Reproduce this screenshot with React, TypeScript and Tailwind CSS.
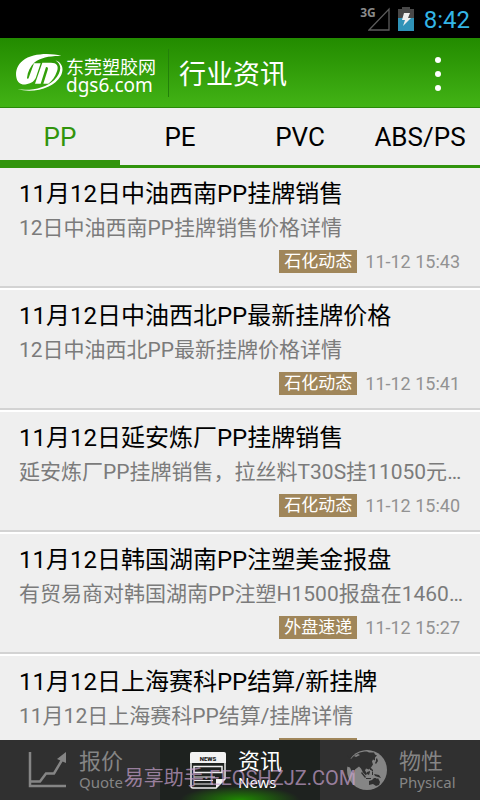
import { useState } from "react";

type NewsItem = {
  title: string;
  summary: string;
  tag: string;
  time: string;
};

const TABS = ["PP", "PE", "PVC", "ABS/PS"];

const NEWS: NewsItem[] = [
  {
    title: "11月12日中油西南PP挂牌销售",
    summary: "12日中油西南PP挂牌销售价格详情",
    tag: "石化动态",
    time: "11-12 15:43",
  },
  {
    title: "11月12日中油西北PP最新挂牌价格",
    summary: "12日中油西北PP最新挂牌价格详情",
    tag: "石化动态",
    time: "11-12 15:41",
  },
  {
    title: "11月12日延安炼厂PP挂牌销售",
    summary: "延安炼厂PP挂牌销售，拉丝料T30S挂11050元/吨",
    tag: "石化动态",
    time: "11-12 15:40",
  },
  {
    title: "11月12日韩国湖南PP注塑美金报盘",
    summary: "有贸易商对韩国湖南PP注塑H1500报盘在1460美元/吨",
    tag: "外盘速递",
    time: "11-12 15:27",
  },
  {
    title: "11月12日上海赛科PP结算/新挂牌",
    summary: "11月12日上海赛科PP结算/挂牌详情",
    tag: "石化动态",
    time: "11-12 15:20",
  },
];

function StatusBar() {
  return (
    <div className="flex h-[38px] shrink-0 items-center justify-end bg-black pr-2.5">
      <span className="self-start pt-1.5 font-['Open_Sans',sans-serif] text-xs leading-[14px] font-bold text-[#8a8a8a]">
        3G
      </span>
      <svg className="-ml-2 h-6 w-[22px]" viewBox="0 0 22 24" fill="none" stroke="#5c5c5c">
        <path d="M1 23 21 2v21z" strokeWidth="1.3" />
      </svg>
      <svg className="ml-2 h-6 w-4" viewBox="0 0 16 24">
        <path d="M4 0h8v2h4v9H0V2h4z" fill="#484848" />
        <path d="M0 11h16v13H0z" fill="#2f93b8" />
        <path d="M6 6h6l-2 5h3L5 19l2-6H4z" fill="#eee" />
      </svg>
      <span className="ml-2.5 pt-0.5 text-2xl leading-8 text-[#33b5e5]">8:42</span>
    </div>
  );
}

function Logo() {
  return (
    <svg className="h-[38px] w-12" viewBox="48 72 144 114" fill="#fff">
      <path d="M184 78C150 68 96 70 68 92c-18 14-22 34-19 50 3 18 16 24 30 21 16-3 26-10 30-24l13-39h-20l-16 44c-2 4-6 3-5-1 2-17 10-34 23-46 18-14 46-20 80-19z" />
      <path d="M127 98h26c17 0 24 10 18 26-6 17-14 29-26 37h-15l13-41c2-6 1-9-5-9l-16 50h-17z" />
      <path d="M166 91c23 8 26 28 16 47-20 36-78 53-130 40 44 5 86-4 111-28 21-21 25-46 3-59z" />
    </svg>
  );
}

function ChartIcon() {
  return (
    <svg className="h-9 w-10" viewBox="0 0 40 36" fill="none" stroke="#858585">
      <path d="M3 0v34H39" strokeWidth="2.500" />
      <path d="M4 29.500h9l6-8h8L35 8" strokeWidth="2.500" />
      <path d="M39 0v11l-9-4z" fill="#858585" stroke="none" />
    </svg>
  );
}

function NewsIcon() {
  return (
    <svg className="h-[37px] w-9" viewBox="0 0 36 37" fill="none" stroke="#eee">
      <path d="M1 10v24q0 2 2 2h23l9-9V10" strokeWidth="1.500" />
      <path d="M0 11V2q0-2 2-2h32q2 0 2 2v9z" fill="#f2f2f2" stroke="none" />
      <path d="M4 14.500h28v6H4z" strokeWidth="1.500" />
      <path d="M4 25h21M4 28.500h19M4 32h19" strokeWidth="1.200" />
      <path d="M26 36v-9h9z" fill="#f2f2f2" stroke="none" />
      <text x="18" y="8.500" textAnchor="middle" fill="#222" stroke="none" fontSize="6" fontWeight="900">
        NEWS
      </text>
    </svg>
  );
}

function GlobeIcon() {
  return (
    <svg className="h-10 w-10" viewBox="0 0 40 40">
      <circle cx="20" cy="20" r="20" fill="#858585" />
      {/* Asia */}
      <path
        d="M4 9C8 4 13 1.500 20 1.500l2 1 5 0 1 2 2 1-2 2 0 3-2-1-1 2 1 3-2 3-2 2-3-1-1 2 2 3-1 2-3-3-2-4-2-2-4 3-1 4-2-1-2-5-3-1-2 2-2-1c0-4 1-8 4-12z"
        fill="#303030"
      />
      <path d="M7 6l4-2 2 1-4 2z" fill="#858585" />
      <path d="M29 9l1-1 1 3-2 3-1-1 1-2zM23 18l1 0 0 2-1 0z" fill="#303030" />
      {/* islands and Australia */}
      <path d="M15 22l4 5-1 1-4-5zM20 22l3-1 0 1-1 3-2-1zM24 18l2 2 0 2-2-2zM25 22l1 0 0 3-1 0zM19 28l5 0 0 1-5 0zM27 24l5 1 2 3-3-1-3-1z" fill="#303030" />
      <path d="M22 31l3-1 2-2 2 0 1 1 1-1 2 4-1 3-3 1-3-2-4 1z" fill="#303030" />
    </svg>
  );
}

const NAV = [
  { label: "报价", sub: "Quote", Icon: ChartIcon },
  { label: "资讯", sub: "News", Icon: NewsIcon },
  { label: "物性", sub: "Physical", Icon: GlobeIcon },
];

export default function App() {
  const [tab, setTab] = useState("PP");
  const [section, setSection] = useState("News");

  return (
    <div className="relative flex h-screen flex-col overflow-hidden bg-[#efefef] font-['Roboto','Noto_Sans_CJK_SC',sans-serif] text-black">
      <StatusBar />

      <header className="flex h-[70px] shrink-0 items-center border-b border-[#2a8a08] bg-linear-to-b from-[#228b00] to-[#42b315] pl-4 text-white">
        <Logo />
        <div className="ml-0.5 flex flex-col pt-1">
          <span className="text-lg leading-5">东莞塑胶网</span>
          <span className="font-['Noto_Sans',sans-serif] text-[19px] leading-3.5">dgs6.com</span>
        </div>
        <div className="ml-3 h-12 w-px bg-[#23800a]" />
        <h1 className="ml-2.5 pt-1 text-[27px] leading-9">行业资讯</h1>
        <button
          type="button"
          aria-label="更多"
          className="mr-7 ml-auto flex h-12 w-7 flex-col items-center justify-center gap-2 pt-0.5"
        >
          <span className="size-1.5 rounded-full bg-white" />
          <span className="size-1.5 rounded-full bg-white" />
          <span className="size-1.5 rounded-full bg-white" />
        </button>
      </header>

      <nav className="grid h-[60px] shrink-0 grid-cols-4 border-b-3 border-[#31940c]">
        {TABS.map((name) => (
          <button
            key={name}
            type="button"
            onClick={() => setTab(name)}
            className={
              tab === name
                ? "border-b-5 border-[#31940c] pt-1.5 text-[26px] leading-8 text-[#31940c]"
                : "border-b-5 border-transparent pt-1.5 text-[26px] leading-8"
            }
          >
            {name}
          </button>
        ))}
      </nav>

      <main className="min-h-0 flex-1 overflow-hidden">
        <ul>
          {NEWS.map((item) => (
            <li key={item.title} className="border-b-2 border-white">
              <a href="#" className="block border-b-2 border-[#d3d3d3] pt-2.5 pr-4 pb-[13px] pl-[19px]">
                <h2 className="truncate text-2xl leading-8">{item.title}</h2>
                <p className="mt-0.5 truncate text-[21px] leading-8 text-[#7b7b7b]">{item.summary}</p>
                <div className="mt-1.5 flex items-center justify-end gap-2 pr-1 text-[17px] leading-[23px]">
                  <span className="bg-[#a0865a] px-[5px] text-white">{item.tag}</span>
                  <span className="text-lg leading-[23px] text-[#929292]">{item.time}</span>
                </div>
              </a>
            </li>
          ))}
        </ul>
      </main>

      <footer className="grid h-[60px] shrink-0 grid-cols-3 bg-[#303030]">
        {NAV.map(({ label, sub, Icon }) => (
          <button
            key={sub}
            type="button"
            onClick={() => setSection(sub)}
            className={
              section === sub
                ? "flex items-center bg-[#1e221f] bg-[radial-gradient(ellipse_60px_14px_at_50%_100%,#1f8a00,transparent)] pl-[30px] text-white"
                : "flex items-center pl-[27px] text-[#858585]"
            }
          >
            <Icon />
            <span className="ml-3 flex flex-col items-start">
              <span className="text-[22px] leading-6">{label}</span>
              <span className="font-['Noto_Sans',sans-serif] text-[15px] leading-4">{sub}</span>
            </span>
          </button>
        ))}
      </footer>

      <div className="pointer-events-none absolute inset-x-0 bottom-2 text-center text-xl leading-7 text-[#c9a3cf]/70">
        易享助手·EEOSHZJZ.COM
      </div>
    </div>
  );
}
